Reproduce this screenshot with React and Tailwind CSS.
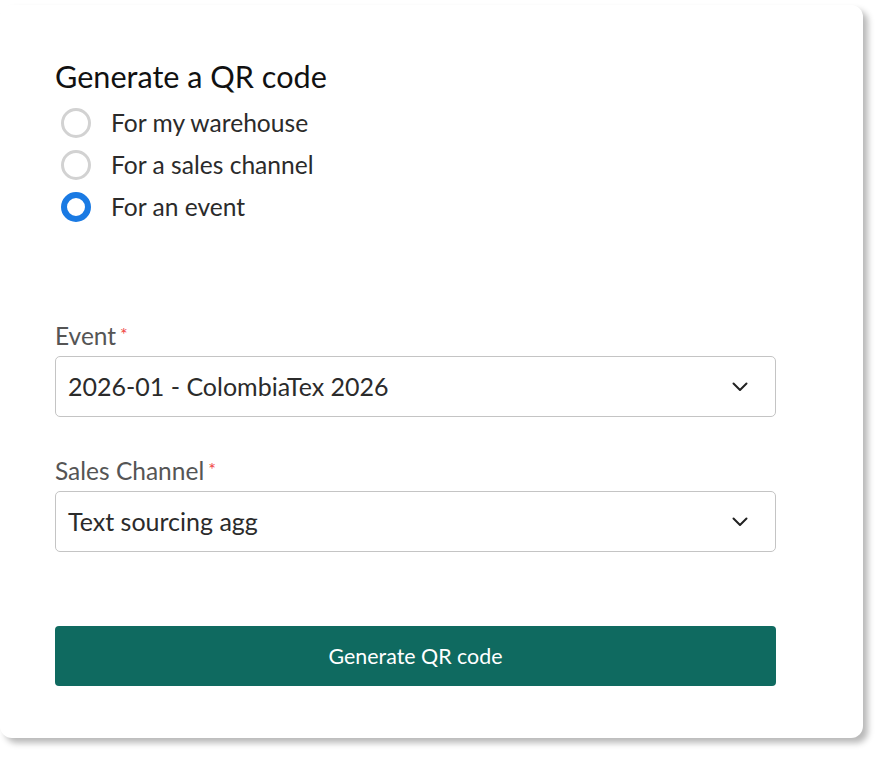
const OPTIONS = [
  { id: "warehouse", label: "For my warehouse" },
  { id: "channel", label: "For a sales channel" },
  { id: "event", label: "For an event" },
];

function Radio({ checked, label }) {
  return (
    <label className="flex h-[42px] items-center">
      {checked ? (
        <span className="ml-[6px] h-[30px] w-[30px] rounded-full border-[6px] border-[#1a7ae3] bg-white" />
      ) : (
        <span className="ml-[6px] h-[30px] w-[30px] rounded-full border-[3px] border-[#d2d2d2] bg-white" />
      )}
      <span className="ml-[20px] text-[24.6px] text-[#2b2b2b]">{label}</span>
    </label>
  );
}

function Chevron() {
  return (
    <svg width="16" height="10" viewBox="0 0 16 10" fill="none" stroke="#222" strokeWidth="2" strokeLinecap="round" strokeLinejoin="round">
      <polyline points="1.5,1.5 8,8 14.5,1.5" />
    </svg>
  );
}

function Select({ label, value }) {
  return (
    <div>
      <div className="flex items-start text-[24.5px] leading-[28px] text-[#555]">
        {label}
        <span className="ml-[4px] mt-[3px] text-[18px] leading-[18px] text-[#ef4444]">*</span>
      </div>
      <div className="mt-[6px] flex h-[61px] items-center justify-between rounded-[5px] border border-[#c4c4c4] pl-[12px] pr-[27px]">
        <span className="text-[25px] text-[#2b2b2b]">{value}</span>
        <Chevron />
      </div>
    </div>
  );
}

export default function App() {
  return (
    <div className="h-[757px] w-[888px] overflow-hidden bg-white pt-[5px] font-['Lato',sans-serif]">
      <div className="h-[733px] w-[863px] rounded-[12px] bg-white pl-[55px] pr-[87px] pt-[52px] shadow-[5px_5px_6px_rgba(0,0,0,0.28)]">
        <h1 className="text-[30.6px] leading-[40px] text-[#111]">Generate a QR code</h1>
        <div className="mt-[5px] flex flex-col">
          {OPTIONS.map((o) => (
            <Radio key={o.id} label={o.label} checked={o.id === "event"} />
          ))}
        </div>

        <div className="mt-[94px]">
          <Select label="Event" value="2026-01 - ColombiaTex 2026" />
        </div>
        <div className="mt-[40px]">
          <Select label="Sales Channel" value="Text sourcing agg" />
        </div>

        <button className="mt-[74px] h-[60px] w-full rounded-[4px] bg-[#0f6a60] text-[21.4px] text-white">
          Generate QR code
        </button>
      </div>
    </div>
  );
}
